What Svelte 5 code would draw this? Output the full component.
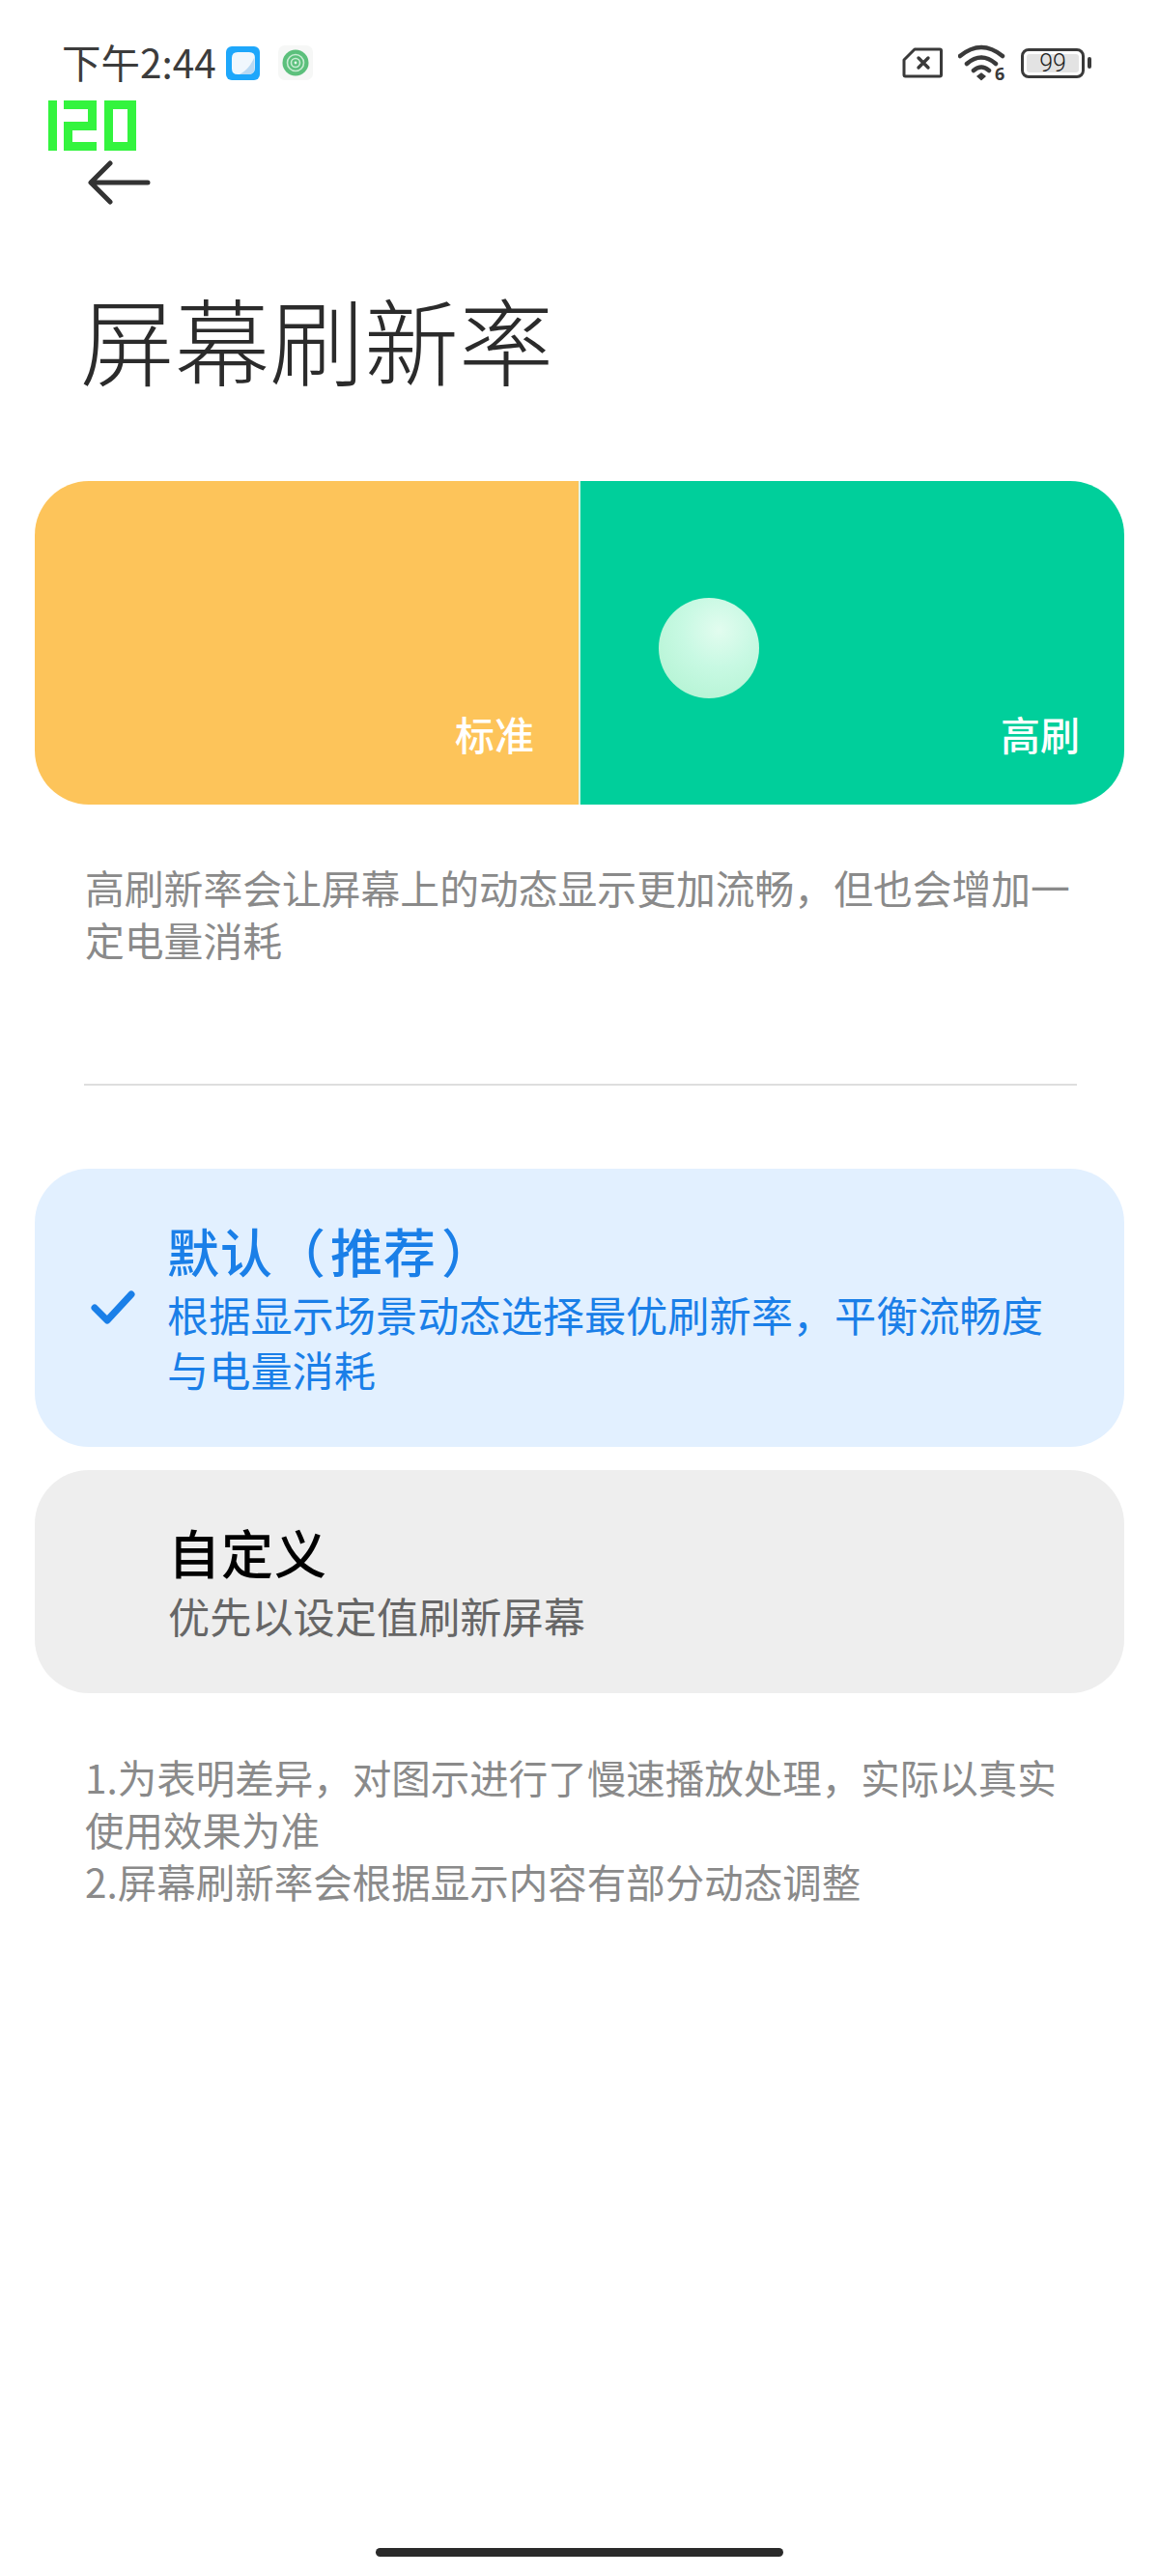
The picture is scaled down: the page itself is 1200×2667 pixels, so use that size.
<script>
  const notes = [
    '1.为表明差异，对图示进行了慢速播放处理，实际以真实使用效果为准',
    '2.屏幕刷新率会根据显示内容有部分动态调整'
  ];
</script>

<div class="page">
  <div class="status">
    <div class="status-left">
      <span class="time">下午2:44</span>
      <svg class="app-icon" viewBox="0 0 35 35">
        <rect width="35" height="35" rx="6" fill="#1ea7fb" />
        <path d="M12 6H24Q30 6 30 12V22Q30 29 23 29H12Q6 29 6 23V12Q6 6 12 6Z" fill="#f0f7fd" />
        <path d="M29.500 11V22Q30 29 23 29H14Q24 24 29.500 11Z" fill="#b9d9f3" />
      </svg>
      <svg class="app-icon second" viewBox="0 0 36 36">
        <rect width="36" height="36" rx="7" fill="#f6f7f6" />
        <circle cx="18" cy="18" r="13.500" fill="#5cc07c" />
        <circle cx="18" cy="18" r="8.500" fill="none" stroke="#c8ecd3" stroke-width="1.600" />
        <circle cx="18" cy="18" r="4.500" fill="none" stroke="#c8ecd3" stroke-width="1.600" />
        <circle cx="18" cy="18" r="1.400" fill="#e5f6ea" />
      </svg>
    </div>
    <div class="status-right">
      <svg class="sim" viewBox="0 0 42 32">
        <path d="M13 2H39A1.500 1.500 0 0 1 40.500 3.500V28.500A1.500 1.500 0 0 1 39 30H3.500A1.500 1.500 0 0 1 2 28.500V13Z" fill="none" stroke="#3a3a3a" stroke-width="3" stroke-linejoin="round" />
        <path d="M17 11L27 21M27 11L17 21" stroke="#3a3a3a" stroke-width="3.400" stroke-linecap="round" />
      </svg>
      <svg class="wifi" viewBox="0 0 50 38">
        <path d="M2 12Q24 -6 46 12" fill="none" stroke="#3a3a3a" stroke-width="4.500" stroke-linecap="round" />
        <path d="M9 20Q24 7 39 20" fill="none" stroke="#3a3a3a" stroke-width="4.500" stroke-linecap="round" />
        <path d="M16 27Q24 20 32 27" fill="none" stroke="#3a3a3a" stroke-width="4.500" stroke-linecap="round" />
        <path d="M20 33L24 30L28 33L24 36.500Z" fill="#3a3a3a" stroke="#3a3a3a" stroke-width="1.500" stroke-linejoin="round" />
        <text x="38" y="36.500" class="wifi-six">6</text>
      </svg>
      <div class="battery">
        <div class="battery-body"><span class="battery-fill">99</span></div>
        <span class="battery-nub"></span>
      </div>
    </div>
  </div>

  <div class="fps" aria-label="120">
    <svg viewBox="0 0 91 52">
      <path d="M0 0H9V52H0ZM16 0H50V31H25V43H50V52H16V22H41V9H16ZM58 0H91V52H58ZM67 9V43H82V9Z" fill="#33f43e" fill-rule="evenodd" />
    </svg>
  </div>

  <div class="back">
    <svg viewBox="0 0 66 46">
      <path d="M63 23H5M24 3L4 23L24 43" fill="none" stroke="#333" stroke-width="5" stroke-linecap="round" stroke-linejoin="round" />
    </svg>
  </div>

  <h1 class="title">屏幕刷新率</h1>

  <div class="banner">
    <div class="half standard"><span>标准</span></div>
    <div class="half high">
      <div class="ball"></div>
      <span>高刷</span>
    </div>
  </div>

  <p class="desc">高刷新率会让屏幕上的动态显示更加流畅，但也会增加一定电量消耗</p>

  <div class="divider"></div>

  <div class="card selected">
    <svg class="check" viewBox="0 0 46 38">
      <path d="M4 19L17 32L42 5" fill="none" stroke="#1a7fe8" stroke-width="7" stroke-linecap="round" stroke-linejoin="round" />
    </svg>
    <div class="card-text">
      <div class="card-title">默认（<span class="paren">推荐</span>）</div>
      <div class="card-sub">根据显示场景动态选择最优刷新率，平衡流畅度与电量消耗</div>
    </div>
  </div>

  <div class="card plain">
    <div class="card-text">
      <div class="card-title">自定义</div>
      <div class="card-sub">优先以设定值刷新屏幕</div>
    </div>
  </div>

  <div class="notes">
    {#each notes as note}
      <p>{note}</p>
    {/each}
  </div>

  <div class="home-bar"></div>
</div>

<style>
  :global(body) {
    margin: 0;
    background: #fff;
  }

  .page {
    position: relative;
    width: 1200px;
    height: 2667px;
    overflow: hidden;
    background: #fff;
    font-family: "Noto Sans CJK SC", "Noto Sans", sans-serif;
    text-spacing-trim: space-all;
  }

  .status {
    display: flex;
    justify-content: space-between;
    align-items: center;
    height: 130px;
    padding: 0 70px 0 64px;
    box-sizing: border-box;
  }

  .status-left,
  .status-right {
    display: flex;
    align-items: center;
  }

  .time {
    font-size: 40.500px;
    color: #3c3c3c;
    line-height: 48px;
    margin-top: -2px;
  }

  .app-icon {
    width: 35px;
    height: 35px;
    margin-left: 10px;
  }

  .app-icon.second {
    margin-left: 19px;
    width: 36px;
    height: 36px;
  }

  .sim {
    width: 42px;
    height: 32px;
  }

  .wifi {
    width: 50px;
    height: 38px;
    margin-left: 16px;
  }

  .wifi-six {
    font-size: 18px;
    font-weight: 700;
    fill: #3a3a3a;
    font-family: "Noto Sans", sans-serif;
  }

  .battery {
    display: flex;
    align-items: center;
    margin-left: 15px;
  }

  .battery-body {
    width: 66px;
    height: 31px;
    box-sizing: border-box;
    border: 3px solid #3a3a3a;
    border-radius: 8px;
    padding: 3px;
    display: flex;
  }

  .battery-fill {
    flex: 1;
    background: #e3e3e3;
    border-radius: 3px;
    font: 300 25px/19px Roboto, sans-serif;
    color: #222;
    text-align: center;
  }

  .battery-nub {
    width: 4px;
    height: 12px;
    margin-left: 3px;
    border-radius: 2px;
    background: #3a3a3a;
  }

  .fps {
    position: absolute;
    left: 50px;
    top: 104px;
    width: 91px;
    height: 52px;
  }

  .fps svg {
    display: block;
    width: 91px;
    height: 52px;
  }

  .back {
    height: 46px;
    margin: 36px 0 0 90px;
  }

  .back svg {
    display: block;
    width: 66px;
    height: 46px;
  }

  .title {
    margin: 72px 0 0 83px;
    font-size: 98px;
    line-height: 130px;
    font-weight: 300;
    color: #2b2b2b;
  }

  .banner {
    display: flex;
    margin: 84px 36px 0 36px;
    height: 335px;
    border-radius: 56px;
    overflow: hidden;
  }

  .half {
    position: relative;
    flex: 1;
    display: flex;
    justify-content: flex-end;
    align-items: flex-end;
    padding: 0 46px 49px 0;
  }

  .half span {
    font-size: 41px;
    line-height: 50px;
    font-weight: 500;
    color: #fff;
  }

  .standard {
    background: #fdc45a;
  }

  .high {
    background: #00cf9b;
    border-left: 2px solid #d8f5e8;
  }

  .ball {
    position: absolute;
    left: 81px;
    top: 121px;
    width: 104px;
    height: 104px;
    border-radius: 50%;
    background: radial-gradient(circle at 60% 32%, #e2fcef 0%, #c8f9e3 40%, #aef2cf 100%);
  }

  .desc {
    margin: 59px 90px 0 88px;
    font-size: 40.800px;
    line-height: 54px;
    color: #8a8a8a;
  }

  .divider {
    height: 2px;
    margin: 122px 85px 0 87px;
    background: #dedede;
  }

  .card {
    display: flex;
    align-items: center;
    margin: 0 36px 0 36px;
    border-radius: 56px;
    box-sizing: border-box;
  }

  .selected {
    margin-top: 86px;
    height: 288px;
    background: #e2f0ff;
    color: #1a7fe8;
    padding-left: 58px;
  }

  .check {
    width: 46px;
    height: 38px;
    flex: none;
    margin-right: 33px;
  }

  .plain {
    margin-top: 24px;
    height: 231px;
    background: #eeeeee;
    color: #111;
    padding-left: 138px;
  }

  .card-text {
    width: 920px;
  }

  .card-title {
    font-size: 54px;
    line-height: 66px;
    font-weight: 500;
    letter-spacing: 1px;
    margin-bottom: 4px;
  }

  .paren {
    margin: 0 5px 0 4px;
  }

  .plain .card-title {
    color: #000;
  }

  .card-sub {
    font-size: 43.200px;
    line-height: 57px;
  }

  .plain .card-sub {
    color: #666;
  }

  .notes {
    margin: 60px 90px 0 88px;
    font-size: 40.500px;
    line-height: 54px;
    color: #8a8a8a;
  }

  .notes p {
    margin: 0;
  }

  .home-bar {
    position: absolute;
    left: 389px;
    top: 2638px;
    width: 422px;
    height: 9px;
    border-radius: 5px;
    background: #2a2a2a;
  }
</style>
